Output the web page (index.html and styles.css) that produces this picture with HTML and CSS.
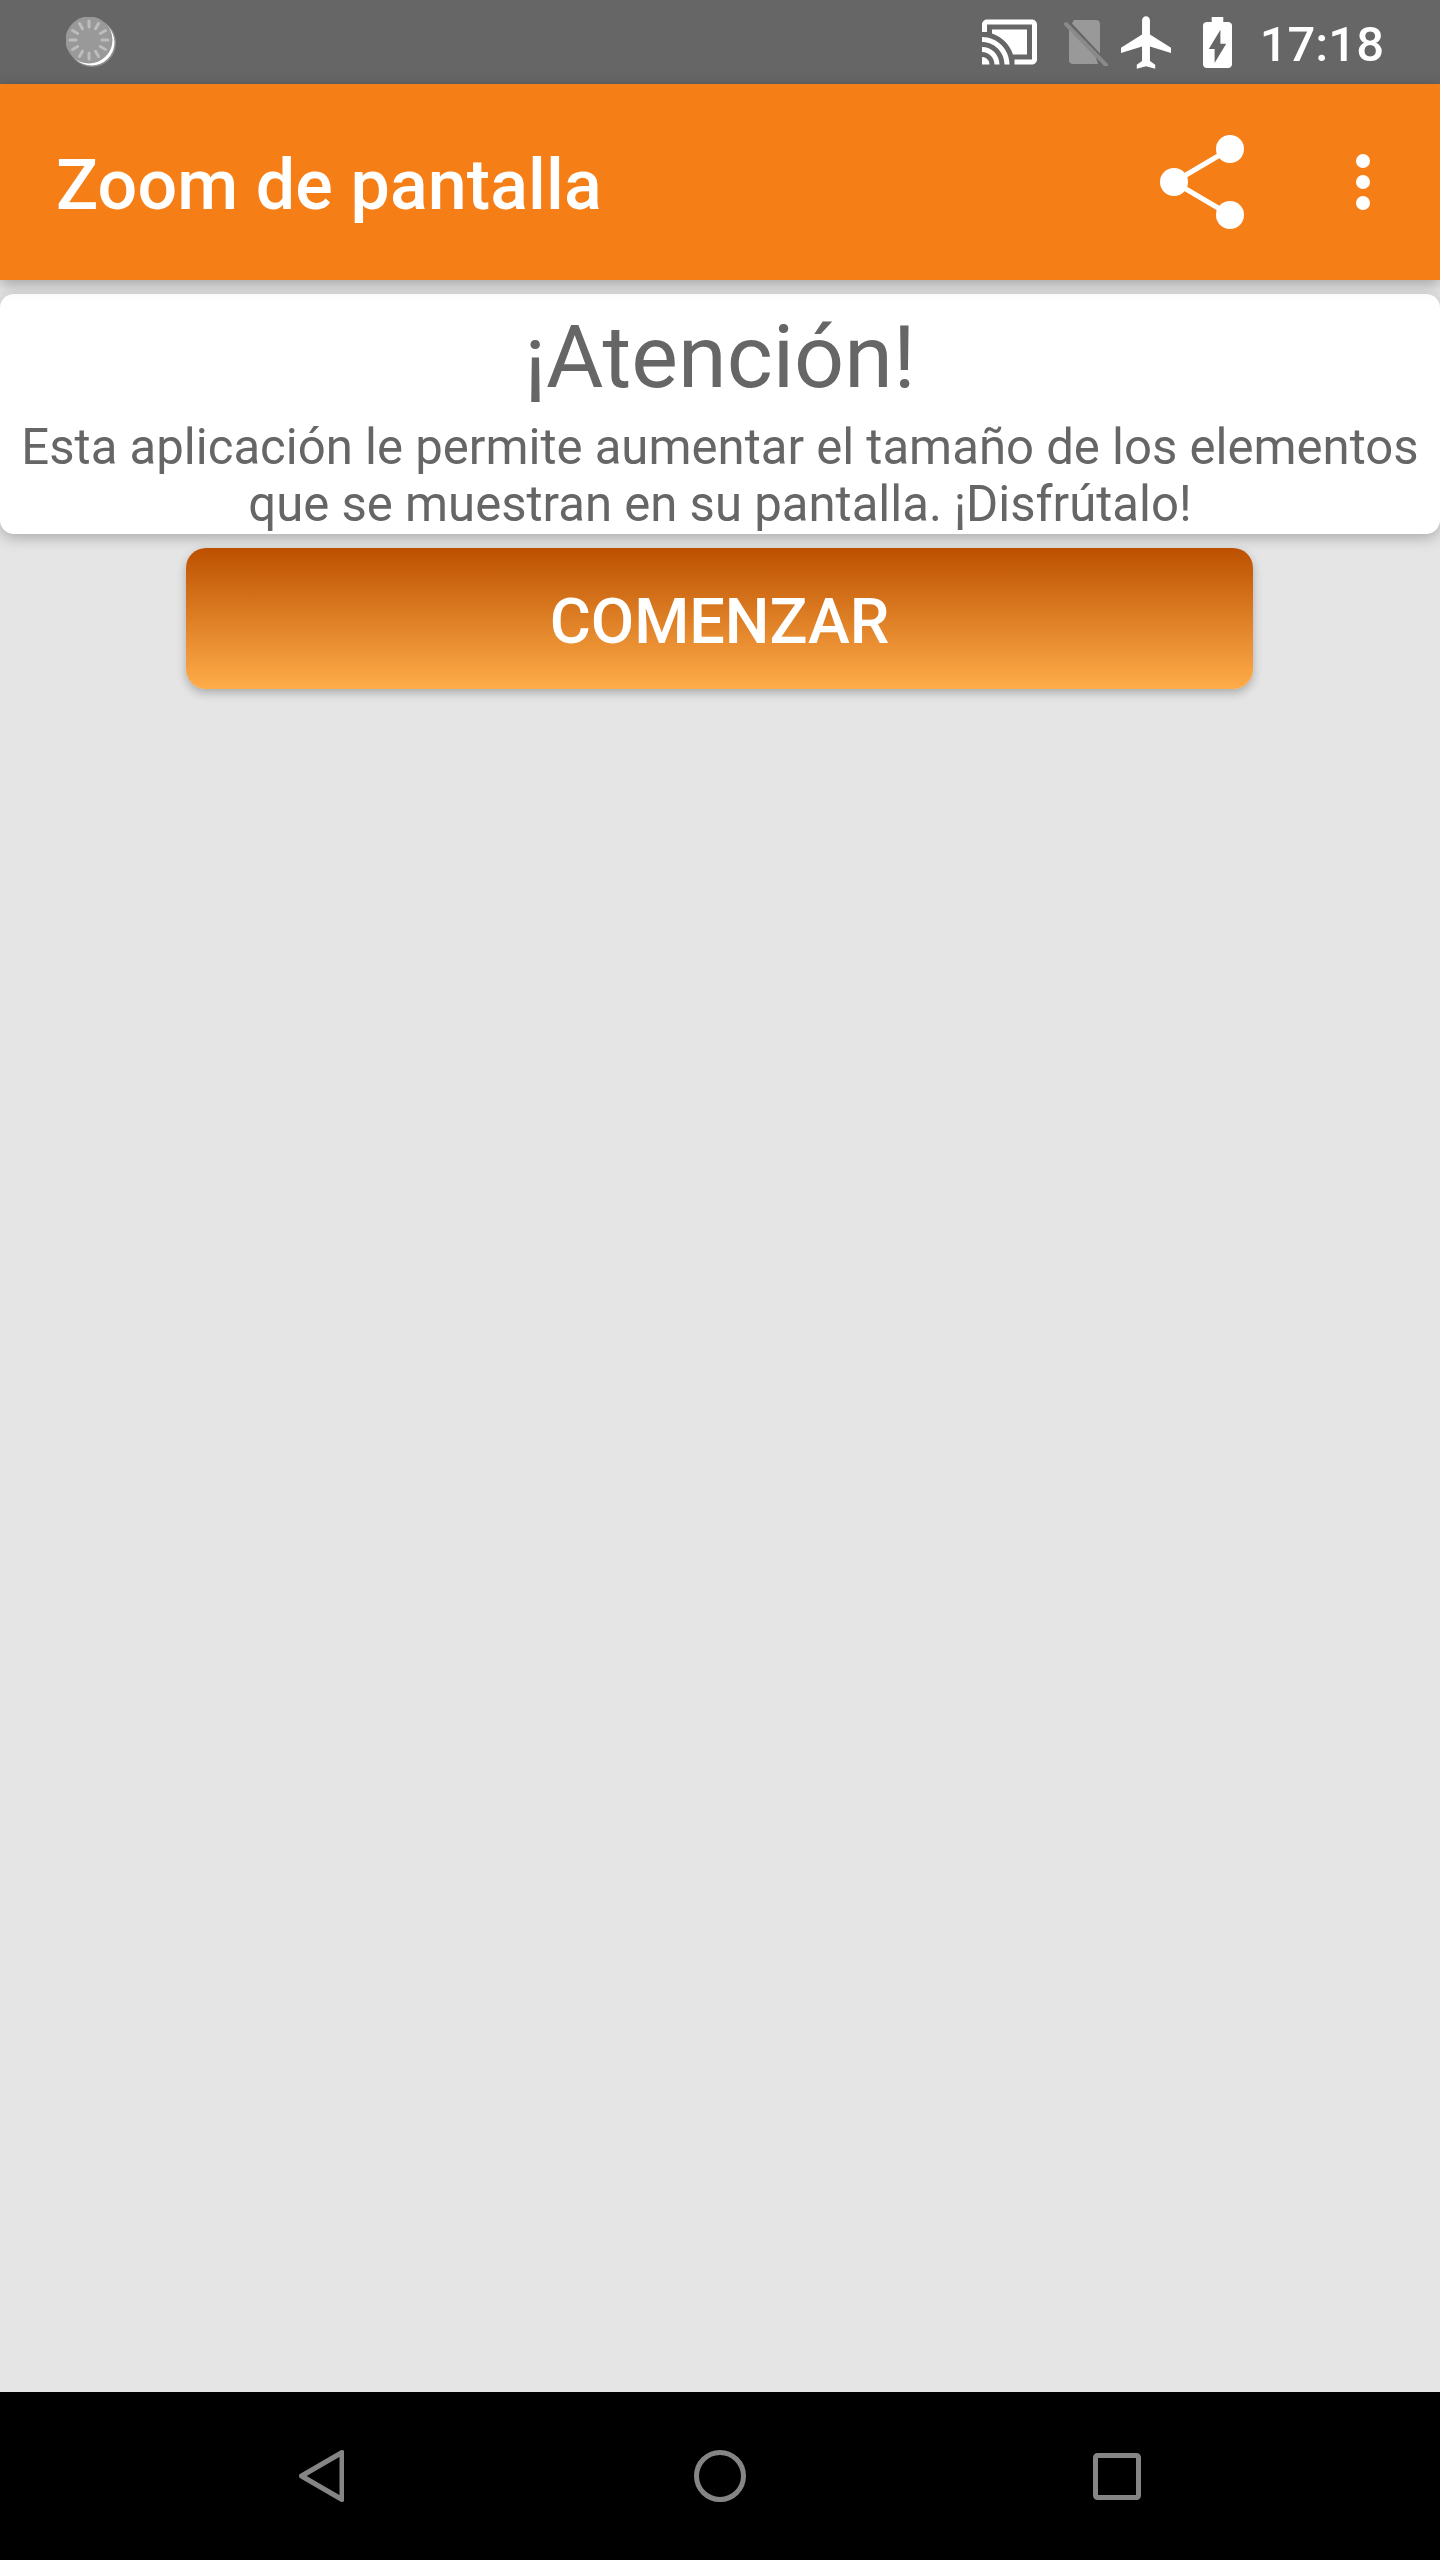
FILE: index.html
```html
<!DOCTYPE html>
<html lang="es">
<head>
    <meta charset="UTF-8">
    <meta name="viewport" content="width=device-width, initial-scale=1.0">
    <title>Zoom de pantalla</title>
    <link rel="stylesheet" href="styles.css">
</head>
<body>
    <div class="screen">
        <div class="status-bar">
            <svg class="spinner" viewBox="0 0 50 50">
                <circle cx="26" cy="26" r="24" fill="#8e8e8e"/>
                <circle cx="25.500" cy="25.500" r="23" fill="#fff"/>
                <circle cx="23" cy="23" r="23.500" fill="#999"/>
                <g stroke="#bdbdbd" stroke-width="3" stroke-linecap="round">
                    <path d="M23 4v6M23 36v6M4 23h6M36 23h6M13.500 6.500l3 5.200M29.500 34.300l3 5.200M6.500 13.500l5.200 3M34.300 29.500l5.200 3M32.500 6.500l-3 5.200M16.500 34.300l-3 5.200M39.500 13.500l-5.200 3M11.700 29.500l-5.200 3"/>
                </g>
            </svg>
            <div class="status-spacer"></div>
            <svg class="icon-cast" viewBox="1 3 22 18" fill="#fff">
                <path d="M21 3H3c-1.100 0-2 .9-2 2v3h2V5h18v14h-7v2h7c1.100 0 2-.9 2-2V5c0-1.100-.9-2-2-2zM1 18v3h3c0-1.660-1.340-3-3-3zm0-4v2c2.760 0 5 2.240 5 5h2c0-3.870-3.130-7-7-7zm0-4v2c4.970 0 9 4.030 9 9h2c0-6.080-4.930-11-11-11zM19 7H5v1.630c3.960 1.280 7.090 4.410 8.370 8.370H19V7z"/>
            </svg>
            <svg class="icon-sim" viewBox="0 0 44 47">
                <path d="M10 1h22c2.500 0 4 1.500 4 4v29.500L8 4.500z" fill="#999"/>
                <path d="M5 9l27 29.500 2 6.500H9c-2.500 0-4-1.500-4-4z" fill="#999"/>
                <path d="M2 5l40 41" stroke="#8a8a8a" stroke-width="4" stroke-linecap="round"/>
            </svg>
            <svg class="icon-plane" viewBox="2 2 19 20" fill="#fff">
                <path d="M21 16v-2l-8-5V3.500c0-.83-.67-1.500-1.500-1.500S10 2.670 10 3.500V9l-8 5v2l8-2.500V19l-2 1.500V22l3.500-1 3.500 1v-1.500L13 19v-5.500l8 2.500z"/>
            </svg>
            <svg class="icon-battery" viewBox="7 2 10 20" preserveAspectRatio="none" fill="#fff">
                <path d="M15.670 4H14V2h-4v2H8.330C7.600 4 7 4.600 7 5.330v15.330C7 21.400 7.600 22 8.330 22h7.330c.74 0 1.340-.6 1.340-1.330V5.330C17 4.600 16.400 4 15.670 4zM11 20v-5.500H9L13 7v5.500h2L11 20z"/>
            </svg>
            <span class="clock">17:18</span>
        </div>

        <div class="app-bar">
            <div class="app-title">Zoom de pantalla</div>
            <svg class="icon-share" viewBox="0 0 84 94">
                <path d="M70 14L14 47L70 80" fill="none" stroke="#fff" stroke-width="5"/>
                <circle cx="70" cy="14" r="14" fill="#fff"/>
                <circle cx="14" cy="47" r="14" fill="#fff"/>
                <circle cx="70" cy="80" r="14" fill="#fff"/>
            </svg>
            <svg class="icon-more" viewBox="0 0 14 56" fill="#fff">
                <circle cx="7" cy="7" r="7"/>
                <circle cx="7" cy="28" r="7"/>
                <circle cx="7" cy="49" r="7"/>
            </svg>
        </div>

        <div class="content">
            <div class="notice-card">
                <h1>¡Atención!</h1>
                <p>Esta aplicación le permite aumentar el tamaño de los elementos que se muestran en su pantalla. ¡Disfrútalo!</p>
            </div>
            <button class="start-button">COMENZAR</button>
        </div>

        <div class="nav-bar">
            <svg class="nav-back" viewBox="0 0 45 52">
                <path d="M43 2.500L2.500 26L43 49.500z" fill="none" stroke="#858585" stroke-width="5" stroke-linejoin="round"/>
            </svg>
            <svg class="nav-home" viewBox="0 0 52 52">
                <circle cx="26" cy="26" r="23.500" fill="none" stroke="#858585" stroke-width="5"/>
            </svg>
            <svg class="nav-recent" viewBox="0 0 48 47">
                <rect x="2.500" y="2.500" width="43" height="42" rx="2" fill="none" stroke="#858585" stroke-width="5"/>
            </svg>
        </div>
    </div>
</body>
</html>
```

FILE: styles.css
```css
body {
    margin: 0;
    padding: 0;
    background-color: #e5e5e5;
    font-family: Roboto, "Liberation Sans", sans-serif;
}

.screen {
    display: flex;
    flex-direction: column;
    height: 2560px;
    overflow: hidden;
}

/* status bar */
.status-bar {
    display: flex;
    align-items: center;
    flex: 0 0 84px;
    height: 84px;
    padding-left: 66px;
    background-color: #666666;
}

.status-spacer {
    flex: 1;
}

.spinner {
    width: 50px;
    height: 50px;
}

.icon-cast {
    width: 55px;
    height: 46px;
}

.icon-sim {
    width: 44px;
    height: 47px;
    margin-left: 27px;
}

.icon-plane {
    width: 50px;
    height: 53px;
    margin-left: 13px;
}

.icon-battery {
    width: 29px;
    height: 51px;
    margin-left: 32px;
}

.clock {
    margin-left: 28px;
    margin-right: 56px;
    color: #ffffff;
    font-size: 49px;
    font-weight: 500;
    line-height: 90px;
    height: 84px;
}

/* app bar */
.app-bar {
    display: flex;
    align-items: center;
    flex: 0 0 196px;
    padding-left: 56px;
    padding-right: 70px;
    background-color: #f57e17;
    box-shadow: 0 4px 14px rgba(0, 0, 0, 0.3);
    position: relative;
}

.app-title {
    flex: 1;
    padding-top: 6px;
    color: #ffffff;
    font-size: 70px;
    font-weight: 500;
    letter-spacing: 0.1px;
}

.icon-share {
    width: 84px;
    height: 94px;
    margin-right: 112px;
}

.icon-more {
    width: 14px;
    height: 56px;
}

/* main content */
.content {
    flex: 1;
    padding-top: 14px;
}

.notice-card {
    height: 240px;
    box-sizing: border-box;
    padding: 12px 10px 0;
    background: #ffffff;
    border-radius: 14px;
    box-shadow: 0 4px 14px rgba(0, 0, 0, 0.25);
    color: #666666;
    text-align: center;
}

.notice-card h1 {
    margin: 0 0 11px;
    font-size: 88px;
    font-weight: 400;
    line-height: 102px;
}

.notice-card p {
    margin: 0;
    font-size: 49.1px;
    line-height: 57px;
}

.start-button {
    display: block;
    width: 1067px;
    height: 141px;
    margin: 14px 0 0 186px;
    padding: 6px 0 0;
    border: none;
    border-radius: 20px;
    background: linear-gradient(#bc5000, #ffad4a);
    box-shadow: 0 4px 10px rgba(0, 0, 0, 0.25);
    color: #ffffff;
    font-family: inherit;
    font-size: 63px;
    font-weight: 500;
}

/* navigation bar */
.nav-bar {
    position: relative;
    display: flex;
    align-items: center;
    flex: 0 0 168px;
    background-color: #000000;
}

.nav-back {
    width: 45px;
    height: 52px;
    margin-left: 299px;
}

.nav-home {
    width: 52px;
    height: 52px;
    margin-left: 350px;
}

.nav-recent {
    width: 48px;
    height: 47px;
    margin-left: 347px;
}
```
